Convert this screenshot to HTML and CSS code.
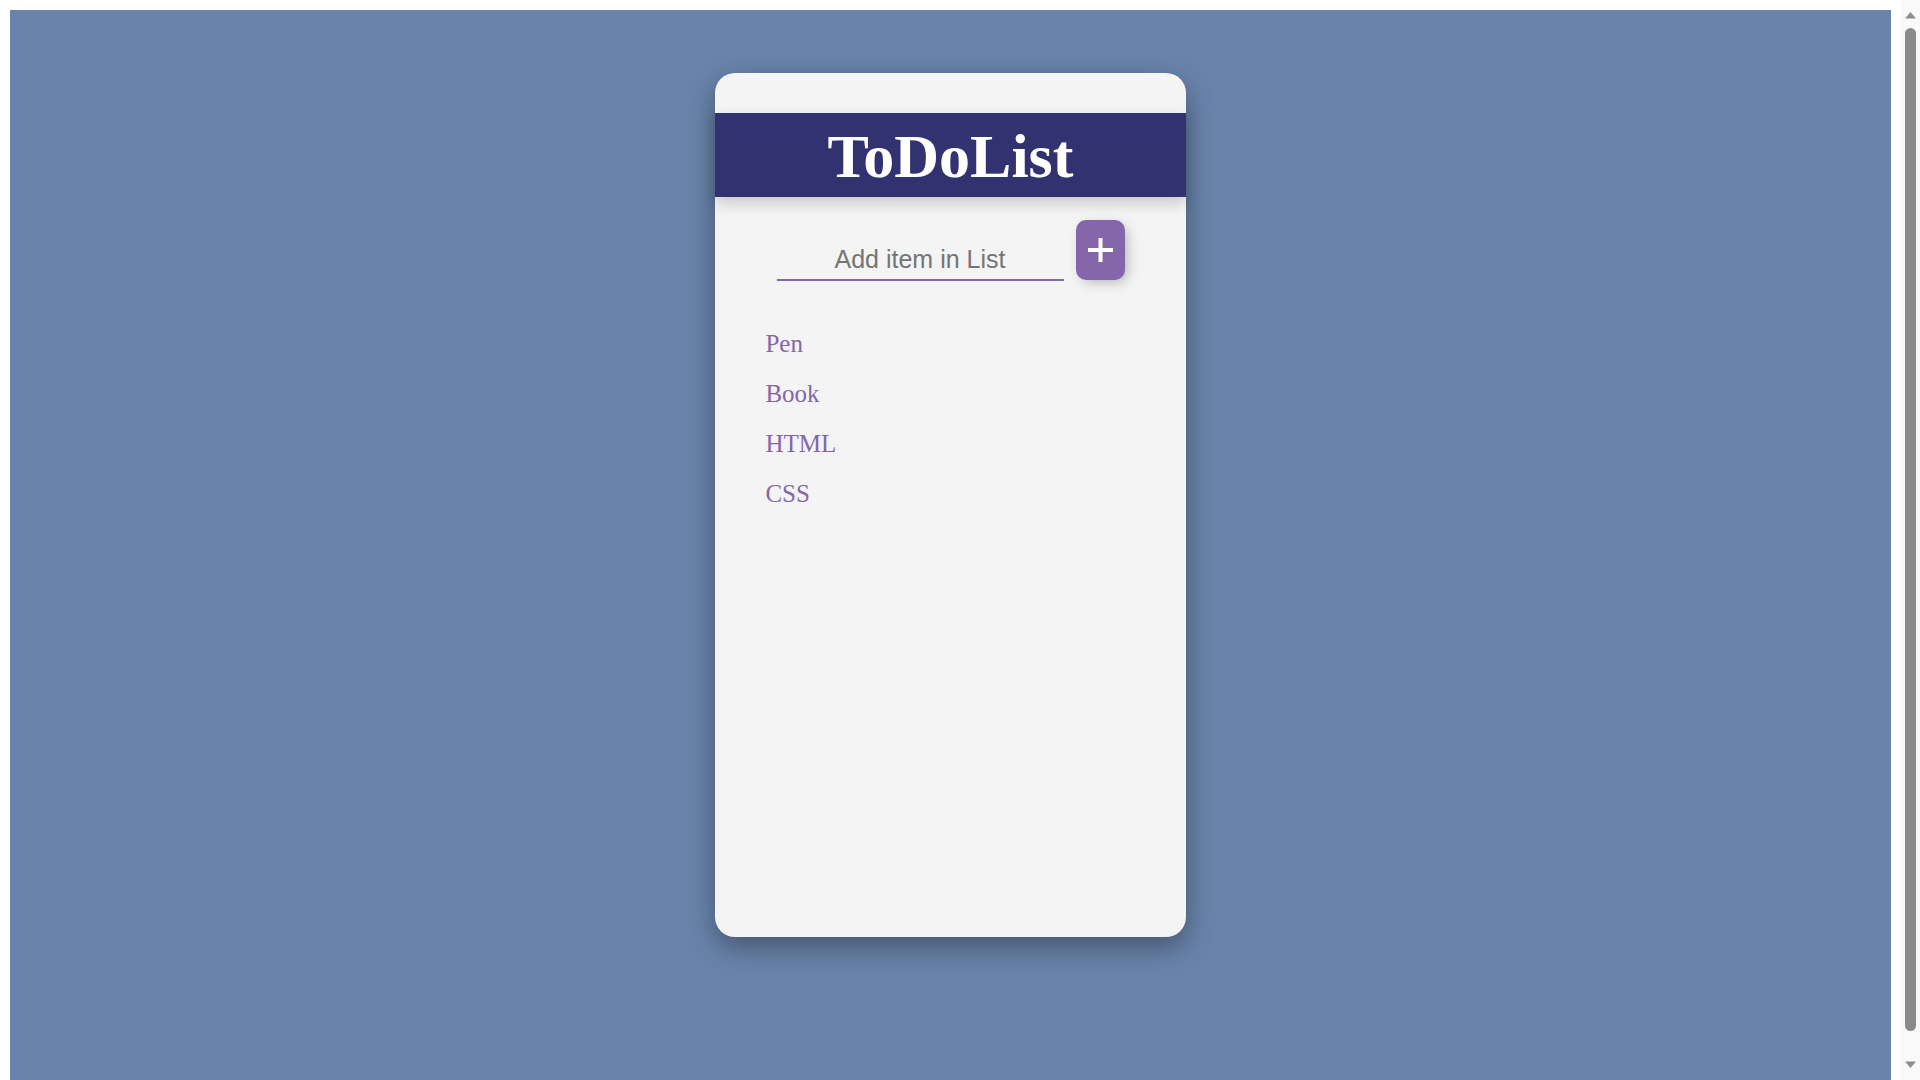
FILE: index.html
```html
<!DOCTYPE html>
<html lang="en">
<head>
<meta charset="UTF-8">
<title>ToDoList</title>
<link rel="stylesheet" href="styles.css">
</head>
<body>
<div class="page">
  <div class="card">
    <h1 class="title">ToDoList</h1>
    <div class="add-row">
      <input class="add-input" type="text" placeholder="Add item in List">
      <button class="add-btn" type="button" aria-label="Add">
        <svg width="25" height="24" viewBox="0 0 25 24"><path d="M12.5 0V24M0 12H25" stroke="#fff" stroke-width="4"/></svg>
      </button>
    </div>
    <ul class="items">
      <li>Pen</li>
      <li>Book</li>
      <li>HTML</li>
      <li>CSS</li>
    </ul>
  </div>
</div>
<div class="scrollbar" aria-hidden="true">
  <svg class="arrow arrow-up" width="11" height="7" viewBox="0 0 11 7"><path d="M5.5 0L11 6.5H0Z" fill="#8e8e8e"/></svg>
  <div class="thumb"></div>
  <svg class="arrow arrow-down" width="11" height="7" viewBox="0 0 11 7"><path d="M0 0.5H11L5.5 7Z" fill="#8e8e8e"/></svg>
</div>
</body>
</html>
```
FILE: styles.css
```css
html, body { margin: 0; padding: 0; background: #fff; }
body { font-family: "Liberation Serif", "Times New Roman", serif; overflow: hidden; }
.page {
  margin: 10px 29px 10px 10px;
  height: 100vh;
  background: #6983aa;
  display: flex;
  justify-content: center;
  align-items: flex-start;
}
.card {
  margin-top: 63px;
  width: 25%;
  height: 80vh;
  background: #f4f4f4;
  border-radius: 20px;
  box-shadow: 0 10px 28px rgba(0,0,0,0.35);
  display: flex;
  flex-direction: column;
}
.title {
  margin: 40px 0 0;
  height: 84px;
  box-sizing: border-box;
  background: #31326f;
  color: #fff;
  font-family: "Liberation Serif", "Times New Roman", serif;
  font-weight: bold;
  font-size: 62px;
  line-height: 86px;
  text-align: center;
  box-shadow: 0 6px 14px rgba(0,0,0,0.18);
}
.add-row {
  display: flex;
  justify-content: center;
  align-items: flex-end;
  gap: 12px;
  margin-top: 23px;
}
.add-input {
  width: 287px;
  box-sizing: border-box;
  height: 35px;
  padding: 0 0 6px;
  border: none;
  border-bottom: 2px solid #8566aa;
  background: transparent;
  font-family: "Liberation Sans", Arial, sans-serif;
  font-size: 25px;
  text-align: center;
  color: #444;
  outline: none;
}
.add-input::placeholder { color: #757575; }
.add-btn {
  width: 49px;
  height: 60px;
  border: none;
  border-radius: 10px;
  background: #8566aa;
  box-shadow: 4px 4px 14px -3px rgba(0,0,0,0.3);
  display: flex;
  align-items: center;
  justify-content: center;
  padding: 0;
  margin-bottom: 1px;
}
.items {
  list-style: none;
  margin: 46px 0 0;
  padding: 0 0 0 50px;
}
.items li {
  color: #8566aa;
  font-size: 25px;
  line-height: 50px;
  height: 50px;
}
.items li:first-child { margin-top: -8px; }
.scrollbar {
  position: fixed;
  top: 0;
  right: 0;
  width: 19px;
  height: 100vh;
  background: #f9f9f9;
  display: flex;
  flex-direction: column;
  align-items: center;
}
.arrow { display: block; flex: none; }
.arrow-up { margin-top: 12px; }
.thumb {
  width: 11px;
  margin-top: 9px;
  height: 1003px;
  background: #8a8a8a;
  border-radius: 6px;
}
.arrow-down { margin-top: 30px; }
```
